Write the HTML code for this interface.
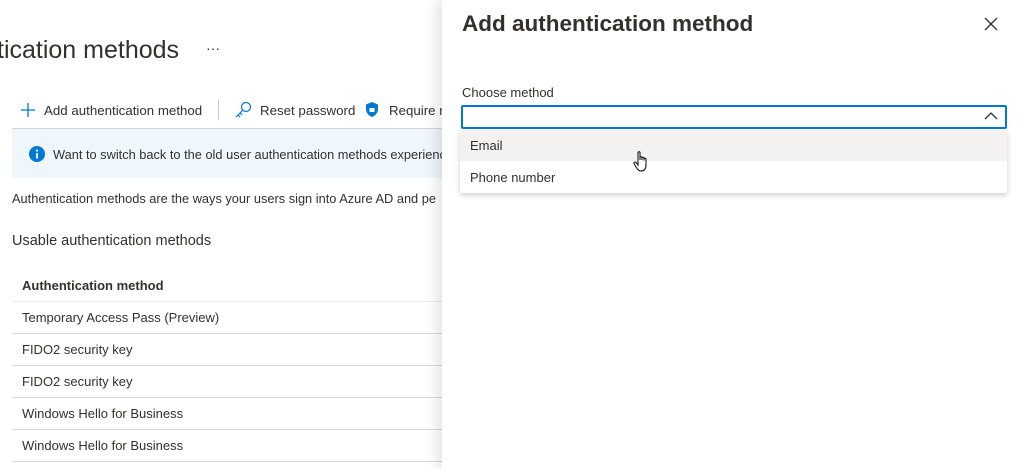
<!DOCTYPE html>
<html><head><meta charset="utf-8"><style>
*{margin:0;padding:0;box-sizing:border-box}
body{width:1026px;height:469px;overflow:hidden;background:#fff;font-family:"Liberation Sans",sans-serif;color:#323130;position:relative;font-size:13px}
.a{position:absolute;white-space:nowrap}
.row{position:absolute;left:12px;width:440px;height:32px;border-bottom:1px solid #d6d6d6;padding-left:10px;line-height:32px;font-size:13px}
</style></head><body>
<div class="a" style="left:-3px;top:36px;font-size:25px;color:#323130">tication methods</div>
<div class="a" style="left:206px;top:40px;font-size:14px">···</div>
<svg class="a" style="left:20px;top:102px" width="16" height="16"><path d="M8 1V15M1 8H15" stroke="#0078d4" stroke-width="1.3"/></svg>
<div class="a" style="left:44px;top:103px;font-size:13.3px">Add authentication method</div>
<div class="a" style="left:218px;top:100px;width:1px;height:20px;background:#c8c6c4"></div>
<svg class="a" style="left:234px;top:101px" width="18" height="18"><circle cx="12" cy="6" r="4.5" fill="none" stroke="#0078d4" stroke-width="1.2"/><path d="M9 9L2 16M4 14L6 16M6 12L8 14" stroke="#0078d4" stroke-width="1.2" fill="none"/></svg>
<div class="a" style="left:260px;top:103px;font-size:13.3px">Reset password</div>
<svg class="a" style="left:365px;top:101px" width="14" height="17"><path d="M7 1L13 3.5V8C13 12 10 15 7 16C4 15 1 12 1 8V3.5Z" fill="#0078d4"/><rect x="4.5" y="7" width="5" height="4" fill="#fff"/></svg>
<div class="a" style="left:389px;top:103px;font-size:13.3px">Require re</div>
<div class="a" style="left:12px;top:128px;width:440px;height:1px;background:#d6d6d6"></div>
<div class="a" style="left:12px;top:129px;width:440px;height:49px;background:#eff6fc"></div>
<svg class="a" style="left:29px;top:146px" width="16" height="16"><circle cx="8" cy="8" r="8" fill="#0078d4"/><rect x="7.1" y="7" width="1.8" height="5.5" fill="#fff"/><circle cx="8" cy="4.6" r="1.1" fill="#fff"/></svg>
<div class="a" style="left:53px;top:147px;font-size:12.8px">Want to switch back to the old user authentication methods experience? C</div>
<div class="a" style="left:12px;top:191px;font-size:12.8px">Authentication methods are the ways your users sign into Azure AD and pe</div>
<div class="a" style="left:12px;top:233px;font-size:14.5px">Usable authentication methods</div>
<div class="row" style="top:270px;font-weight:bold;border-bottom-color:#edebe9">Authentication method</div>
<div class="row" style="top:302px">Temporary Access Pass (Preview)</div>
<div class="row" style="top:334px">FIDO2 security key</div>
<div class="row" style="top:366px">FIDO2 security key</div>
<div class="row" style="top:398px">Windows Hello for Business</div>
<div class="row" style="top:430px">Windows Hello for Business</div>

<div class="a" style="left:442px;top:0;width:584px;height:469px;background:#fff;box-shadow:-6px 0 12px rgba(0,0,0,0.10)"></div>
<div class="a" style="left:462px;top:11px;font-size:22.5px;font-weight:bold;color:#323130">Add authentication method</div>
<svg class="a" style="left:984px;top:17px" width="14" height="14"><path d="M1 1L13 13M13 1L1 13" stroke="#323130" stroke-width="1.3"/></svg>
<div class="a" style="left:462px;top:85px;font-size:13px">Choose method</div>
<div class="a" style="left:461px;top:105px;width:546px;height:24px;border:2px solid #0078d4;border-radius:2px"></div>
<svg class="a" style="left:984px;top:111px" width="14" height="10"><path d="M1 8L7 2L13 8" stroke="#323130" stroke-width="1.3" fill="none"/></svg>
<div class="a" style="left:460px;top:130px;width:547px;height:63px;background:#fff;box-shadow:0 2px 6px rgba(0,0,0,0.2);border-radius:2px"></div>
<div class="a" style="left:460px;top:130px;width:547px;height:31px;background:#f3f2f1"></div>
<div class="a" style="left:470px;top:138px;font-size:13px">Email</div>
<div class="a" style="left:470px;top:170px;font-size:13px">Phone number</div>
<svg class="a" style="left:633px;top:150px" width="20" height="24"><path d="M5 2.5C5 1.5 7 1.5 7 2.5V10V7.5C7 6.5 9 6.5 9 7.5V10V8C9 7 11 7 11 8V10.5V9C11 8 13 8 13 9V15C13 19 11 21 8 21C5.5 21 4.5 19 3 17L1 13.5C0.5 12.5 2 11.5 3 12.5L5 15Z" fill="#fff" stroke="#000" stroke-width="1"/></svg>
</body></html>
